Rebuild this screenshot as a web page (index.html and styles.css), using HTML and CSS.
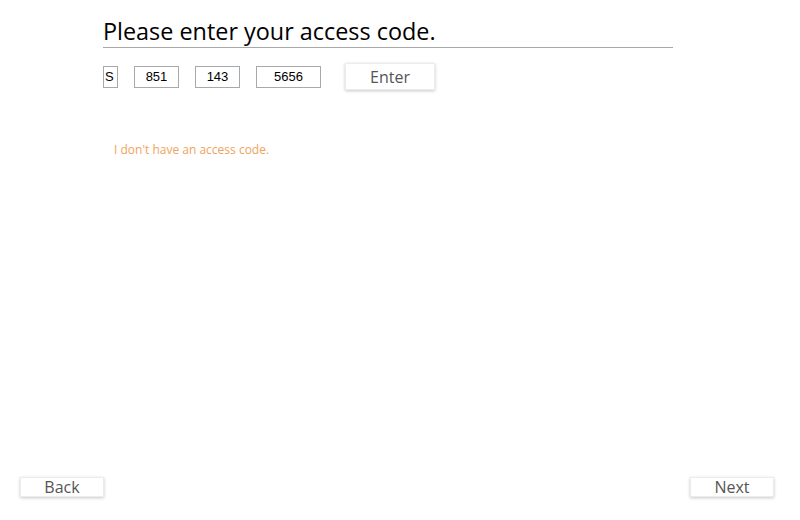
FILE: index.html
```html
<!DOCTYPE html>
<html>
<head>
<meta charset="utf-8">
<link rel="stylesheet" href="styles.css">
</head>
<body>
<div class="page">
  <main class="content">
    <h1 class="title">Please enter your access code.</h1>
    <div class="code-row">
      <input class="code code-s" type="text" value="S">
      <input class="code code-3" type="text" value="851">
      <input class="code code-3" type="text" value="143">
      <input class="code code-4" type="text" value="5656">
      <button class="btn btn-enter">Enter</button>
    </div>
    <a class="no-code" href="#">I don't have an access code.</a>
  </main>
  <footer class="nav">
    <button class="btn btn-nav">Back</button>
    <button class="btn btn-nav">Next</button>
  </footer>
</div>
</body>
</html>
```
FILE: styles.css
```css
html, body {
  margin: 0;
  padding: 0;
  background: #fff;
}
.page {
  height: 520px;
  display: flex;
  flex-direction: column;
  font-family: "Open Sans", "Noto Sans", sans-serif;
}
.content {
  flex: 1;
  margin-left: 103px;
  width: 570px;
  padding-top: 15px;
}
.title {
  margin: 0;
  font-weight: normal;
  font-size: 23.4px;
  line-height: 32px;
  color: #000;
  border-bottom: 1px solid #a8a8a8;
}
.code-row {
  display: flex;
  align-items: center;
  margin-top: 15px;
}
.code {
  box-sizing: border-box;
  height: 22px;
  border: 1px solid #a9a9a9;
  padding: 0 1px;
  font-family: "Liberation Sans", Arial, sans-serif;
  font-size: 13px;
  color: #000;
  text-align: center;
  margin: 0 16px 0 0;
  outline: none;
}
.code-s { width: 15px; padding: 0 0 0 1px; text-align: left; }
.code-3 { width: 45px; }
.code-4 { width: 65px; margin-right: 24px; }
.btn {
  box-sizing: border-box;
  background: #fff;
  border: 1px solid #ececec;
  box-shadow: 0 1px 3px rgba(0,0,0,0.22);
  font-family: "Open Sans", "Noto Sans", sans-serif;
  color: #555;
  padding: 0;
  cursor: pointer;
}
.btn-enter {
  width: 90px;
  height: 27px;
  font-size: 16px;
}
.no-code {
  display: inline-block;
  margin-top: 51px;
  margin-left: 11px;
  font-size: 12px;
  color: #f0a35c;
  text-decoration: none;
}
.nav {
  display: flex;
  justify-content: space-between;
  padding: 0 26px 23px 20px;
}
.btn-nav {
  width: 84px;
  height: 20px;
  font-size: 16px;
  line-height: 18px;
}
```
